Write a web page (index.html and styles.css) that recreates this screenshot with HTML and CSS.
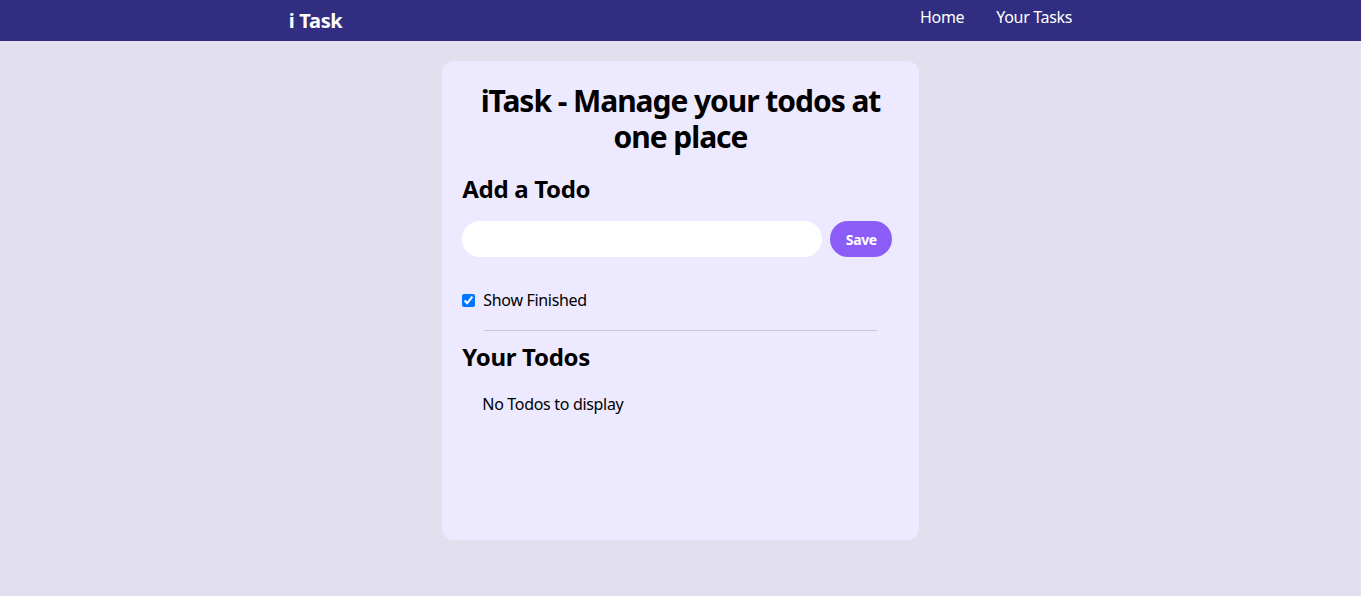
FILE: index.html
```html
<!DOCTYPE html>
<html lang="en">
<head>
<meta charset="utf-8">
<title>iTask</title>
<link rel="stylesheet" href="styles.css">
</head>
<body>
<nav class="navbar">
  <div class="logo">i Task</div>
  <ul class="nav-links">
    <li>Home</li>
    <li>Your Tasks</li>
  </ul>
</nav>
<main class="card">
  <h1 class="title">iTask - Manage your todos at one place</h1>
  <h2 class="section-title add-title">Add a Todo</h2>
  <div class="add-row">
    <input class="todo-input" type="text">
    <button class="save-btn">Save</button>
  </div>
  <label class="show-finished">
    <input type="checkbox" checked>
    <span>Show Finished</span>
  </label>
  <div class="divider"></div>
  <h2 class="section-title todos-title">Your Todos</h2>
  <div class="todos">
    <div class="empty">No Todos to display</div>
  </div>
</main>
</body>
</html>
```
FILE: styles.css
```css
* { box-sizing: border-box; }
html, body { margin: 0; padding: 0; }
body {
  background: #e2e0ee;
  font-family: "Noto Sans", "Open Sans", sans-serif;
  letter-spacing: -0.02em;
  color: #000;
}
.navbar {
  height: 41px;
  background: #312e81;
  color: #fff;
  display: flex;
  justify-content: space-around;
  align-items: center;
}
.logo {
  font-size: 20px;
  font-weight: 700;
}
.nav-links {
  list-style: none;
  margin: 0 0 7px;
  padding: 0;
  display: flex;
  gap: 32px;
  font-size: 16px;
}
.card {
  width: 35%;
  margin: 20px auto;
  min-height: 479px;
  background: #ede9fe;
  border-radius: 12px;
  padding: 20px;
}
.title {
  margin: 0;
  padding-top: 2px;
  text-align: center;
  font-size: 30px;
  line-height: 36px;
  font-weight: 700;
  letter-spacing: -0.035em;
}
.section-title {
  font-size: 24px;
  line-height: 32px;
  font-weight: 700;
  margin: 0;
}
.add-title { margin-top: 18px; }
.add-row {
  display: flex;
  gap: 8px;
  margin-top: 16px;
}
.todo-input {
  width: 360px;
  height: 36px;
  border: none;
  border-radius: 999px;
  background: #fff;
  padding: 4px 12px;
  outline: none;
}
.save-btn {
  height: 36px;
  width: 62px;
  border: none;
  border-radius: 999px;
  background: #8b5cf6;
  color: #fff;
  font-family: inherit;
  letter-spacing: inherit;
  font-weight: 700;
  font-size: 14px;
  padding: 0;
}
.show-finished {
  display: flex;
  align-items: center;
  gap: 8px;
  margin-top: 31px;
  height: 24px;
  font-size: 16px;
}
.show-finished input {
  margin: 0;
  width: 13px;
  height: 13px;
}
.divider {
  width: 90%;
  margin: 18px auto 0;
  height: 1px;
  background: #c7c5d6;
}
.todos-title { margin-top: 10px; }
.empty {
  margin: 19px 20px;
  font-size: 16px;
  line-height: 24px;
}
```
